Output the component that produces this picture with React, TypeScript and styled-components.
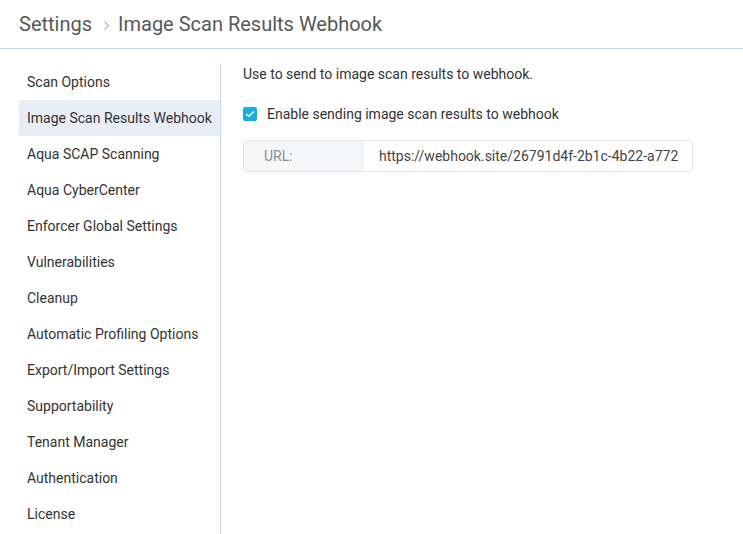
import React from "react";
import styled, { createGlobalStyle } from "styled-components";

const Global = createGlobalStyle`
  html, body { margin: 0; padding: 0; background: #fff; }
  body { font-family: Roboto, "Noto Sans", Arial, sans-serif; color: #333; }
`;

const Page = styled.div`
  width: 743px;
  height: 534px;
  display: flex;
  flex-direction: column;
  overflow: hidden;
`;

const Header = styled.div`
  height: 49px;
  box-sizing: border-box;
  border-bottom: 1px solid #c9d6e3;
  display: flex;
  align-items: center;
  padding: 0 0 0 19px;
  font-size: 20px;
  color: #58595b;
`;

const Crumb = styled.span`
  line-height: 1;
`;

const Sep = styled.span`
  display: inline-flex;
  align-items: center;
  margin: 2px 8px 0 11px;
  color: #b8bcc2;
`;

const Body = styled.div`
  flex: 1;
  display: flex;
  padding-top: 15px;
`;

const Sidebar = styled.nav`
  width: 201px;
  margin-left: 19px;
  border-right: 1px solid #c9d6e3;
  display: flex;
  flex-direction: column;
`;

const NavItem = styled.div<{ $active?: boolean }>`
  height: 36px;
  display: flex;
  align-items: center;
  padding-left: 8px;
  font-size: 14px;
  color: #333;
  background: ${(p) => (p.$active ? "#e8eef6" : "transparent")};
  white-space: nowrap;
`;

const Content = styled.div`
  flex: 1;
  padding-left: 22px;
  display: flex;
  flex-direction: column;
`;

const Intro = styled.div`
  font-size: 14px;
  color: #333;
  height: 20px;
  line-height: 20px;
`;

const CheckRow = styled.label`
  display: flex;
  align-items: center;
  margin-top: 20px;
  font-size: 14px;
  color: #333;
  height: 20px;
`;

const Box = styled.span`
  width: 14px;
  height: 14px;
  border-radius: 2px;
  background: #1aaee0;
  display: inline-flex;
  align-items: center;
  justify-content: center;
  margin-right: 10px;
`;

const InputGroup = styled.div`
  margin-top: 16px;
  width: 450px;
  height: 32px;
  box-sizing: border-box;
  border: 1px solid #e3e6ea;
  border-radius: 3px;
  display: flex;
  overflow: hidden;
`;

const Addon = styled.div`
  width: 119px;
  background: #f5f6f9;
  border-right: 1px solid #e3e6ea;
  display: flex;
  align-items: center;
  padding-left: 20px;
  box-sizing: border-box;
  font-size: 14px;
  color: #8a8d93;
`;

const Value = styled.div`
  flex: 1;
  display: flex;
  align-items: center;
  padding-left: 16px;
  font-size: 14px;
  color: #444;
  white-space: nowrap;
  overflow: hidden;
`;

const items = [
  "Scan Options",
  "Image Scan Results Webhook",
  "Aqua SCAP Scanning",
  "Aqua CyberCenter",
  "Enforcer Global Settings",
  "Vulnerabilities",
  "Cleanup",
  "Automatic Profiling Options",
  "Export/Import Settings",
  "Supportability",
  "Tenant Manager",
  "Authentication",
  "License",
];

export default function App() {
  return (
    <Page>
      <Global />
      <Header>
        <Crumb>Settings</Crumb>
        <Sep>
          <svg width="7" height="11" viewBox="0 0 7 11">
            <path d="M1.5 1.5 L5.5 5.5 L1.5 9.5" fill="none" stroke="#b8bcc2" strokeWidth="1.3" />
          </svg>
        </Sep>
        <Crumb>Image Scan Results Webhook</Crumb>
      </Header>
      <Body>
        <Sidebar>
          {items.map((it) => (
            <NavItem key={it} $active={it === "Image Scan Results Webhook"}>
              {it}
            </NavItem>
          ))}
        </Sidebar>
        <Content>
          <Intro>Use to send to image scan results to webhook.</Intro>
          <CheckRow>
            <Box>
              <svg width="10" height="8" viewBox="0 0 10 8">
                <path d="M1.2 4 L3.8 6.4 L8.8 1.4" fill="none" stroke="#fff" strokeWidth="1.4" />
              </svg>
            </Box>
            Enable sending image scan results to webhook
          </CheckRow>
          <InputGroup>
            <Addon>URL:</Addon>
            <Value>https://webhook.site/26791d4f-2b1c-4b22-a772</Value>
          </InputGroup>
        </Content>
      </Body>
    </Page>
  );
}
